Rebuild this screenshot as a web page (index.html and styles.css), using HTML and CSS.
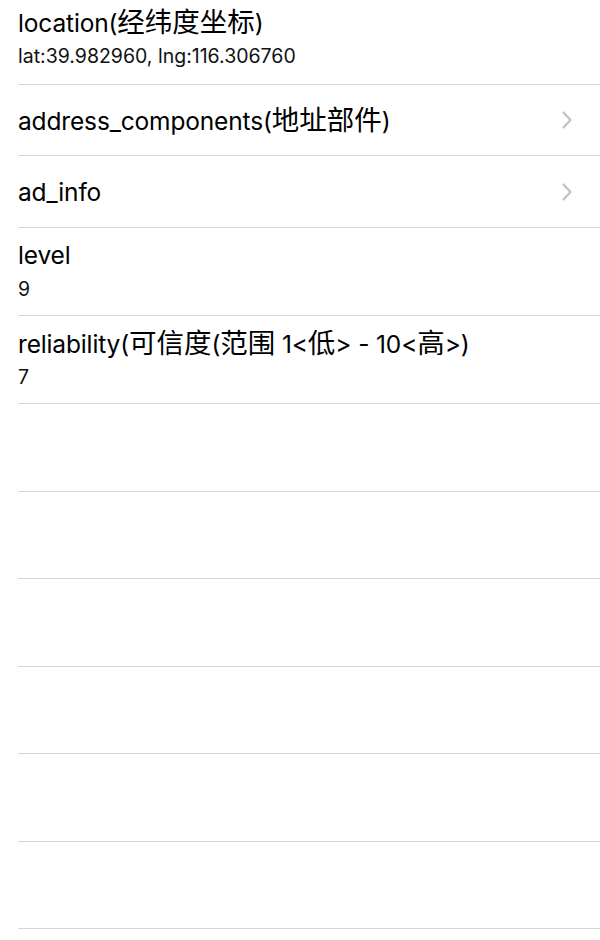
FILE: index.html
```html
<!DOCTYPE html>
<html lang="zh-CN">
<head>
<meta charset="utf-8">
<title>Geocoder result</title>
<link rel="stylesheet" href="styles.css">
</head>
<body>
<ul class="list">
  <li class="row row-detail row-first">
    <div class="title">location(<span class="cjk">经纬度坐标</span>)</div>
    <div class="sub">lat:39.982960, lng:116.306760</div>
  </li>
  <li class="row row-link">
    <div class="title">address_components(<span class="cjk">地址部件</span>)</div>
    <svg class="chev" viewBox="0 0 12 20" width="12" height="20"><path d="M2.5 2.5 L9.5 10 L2.5 17.5" fill="none" stroke="#c2c2c6" stroke-width="2.2" stroke-linecap="round" stroke-linejoin="round"/></svg>
  </li>
  <li class="row row-link">
    <div class="title">ad_info</div>
    <svg class="chev" viewBox="0 0 12 20" width="12" height="20"><path d="M2.5 2.5 L9.5 10 L2.5 17.5" fill="none" stroke="#c2c2c6" stroke-width="2.2" stroke-linecap="round" stroke-linejoin="round"/></svg>
  </li>
  <li class="row row-detail">
    <div class="title">level</div>
    <div class="sub">9</div>
  </li>
  <li class="row row-detail">
    <div class="title">reliability(<span class="cjk">可信度</span>(<span class="cjk">范围</span> 1&lt;<span class="cjk">低</span>&gt; - 10&lt;<span class="cjk">高</span>&gt;)</div>
    <div class="sub">7</div>
  </li>
  <li class="row row-empty"></li>
  <li class="row row-empty"></li>
  <li class="row row-empty"></li>
  <li class="row row-empty"></li>
  <li class="row row-empty"></li>
  <li class="row row-empty"></li>
</ul>
</body>
</html>
```
FILE: styles.css
```css
html, body {
  margin: 0;
  padding: 0;
  background: #ffffff;
}
body {
  font-family: Inter, "Noto Sans CJK SC", sans-serif;
  color: #000000;
  overflow: hidden;
  height: 940px;
}
.list {
  list-style: none;
  margin: 0;
  padding: 0 0 0 18px;
}
.row {
  box-sizing: border-box;
  border-bottom: 1px solid #d6d6d9;
  display: flex;
  padding-right: 27px;
}
.row-detail {
  height: 88px;
  flex-direction: column;
  justify-content: flex-start;
  padding-top: 12px;
}
.row-first {
  height: 85px;
  padding-top: 7px;
}
.row-link {
  height: 71px;
  align-items: center;
  justify-content: space-between;
}
.row-link + .row-link {
  height: 72px;
}
.row-empty {
  height: 87.5px;
}
.title {
  font-size: 24.5px;
  line-height: 30px;
  height: 30px;
  letter-spacing: -0.15px;
  white-space: nowrap;
}
.cjk {
  font-family: "Noto Sans CJK SC", sans-serif;
  font-size: 27.5px;
  line-height: 1;
  letter-spacing: 0;
}
.sub {
  font-size: 19.5px;
  line-height: 24px;
  margin-top: 7px;
  color: #111111;
}
.chev {
  display: block;
  flex: none;
}
```
